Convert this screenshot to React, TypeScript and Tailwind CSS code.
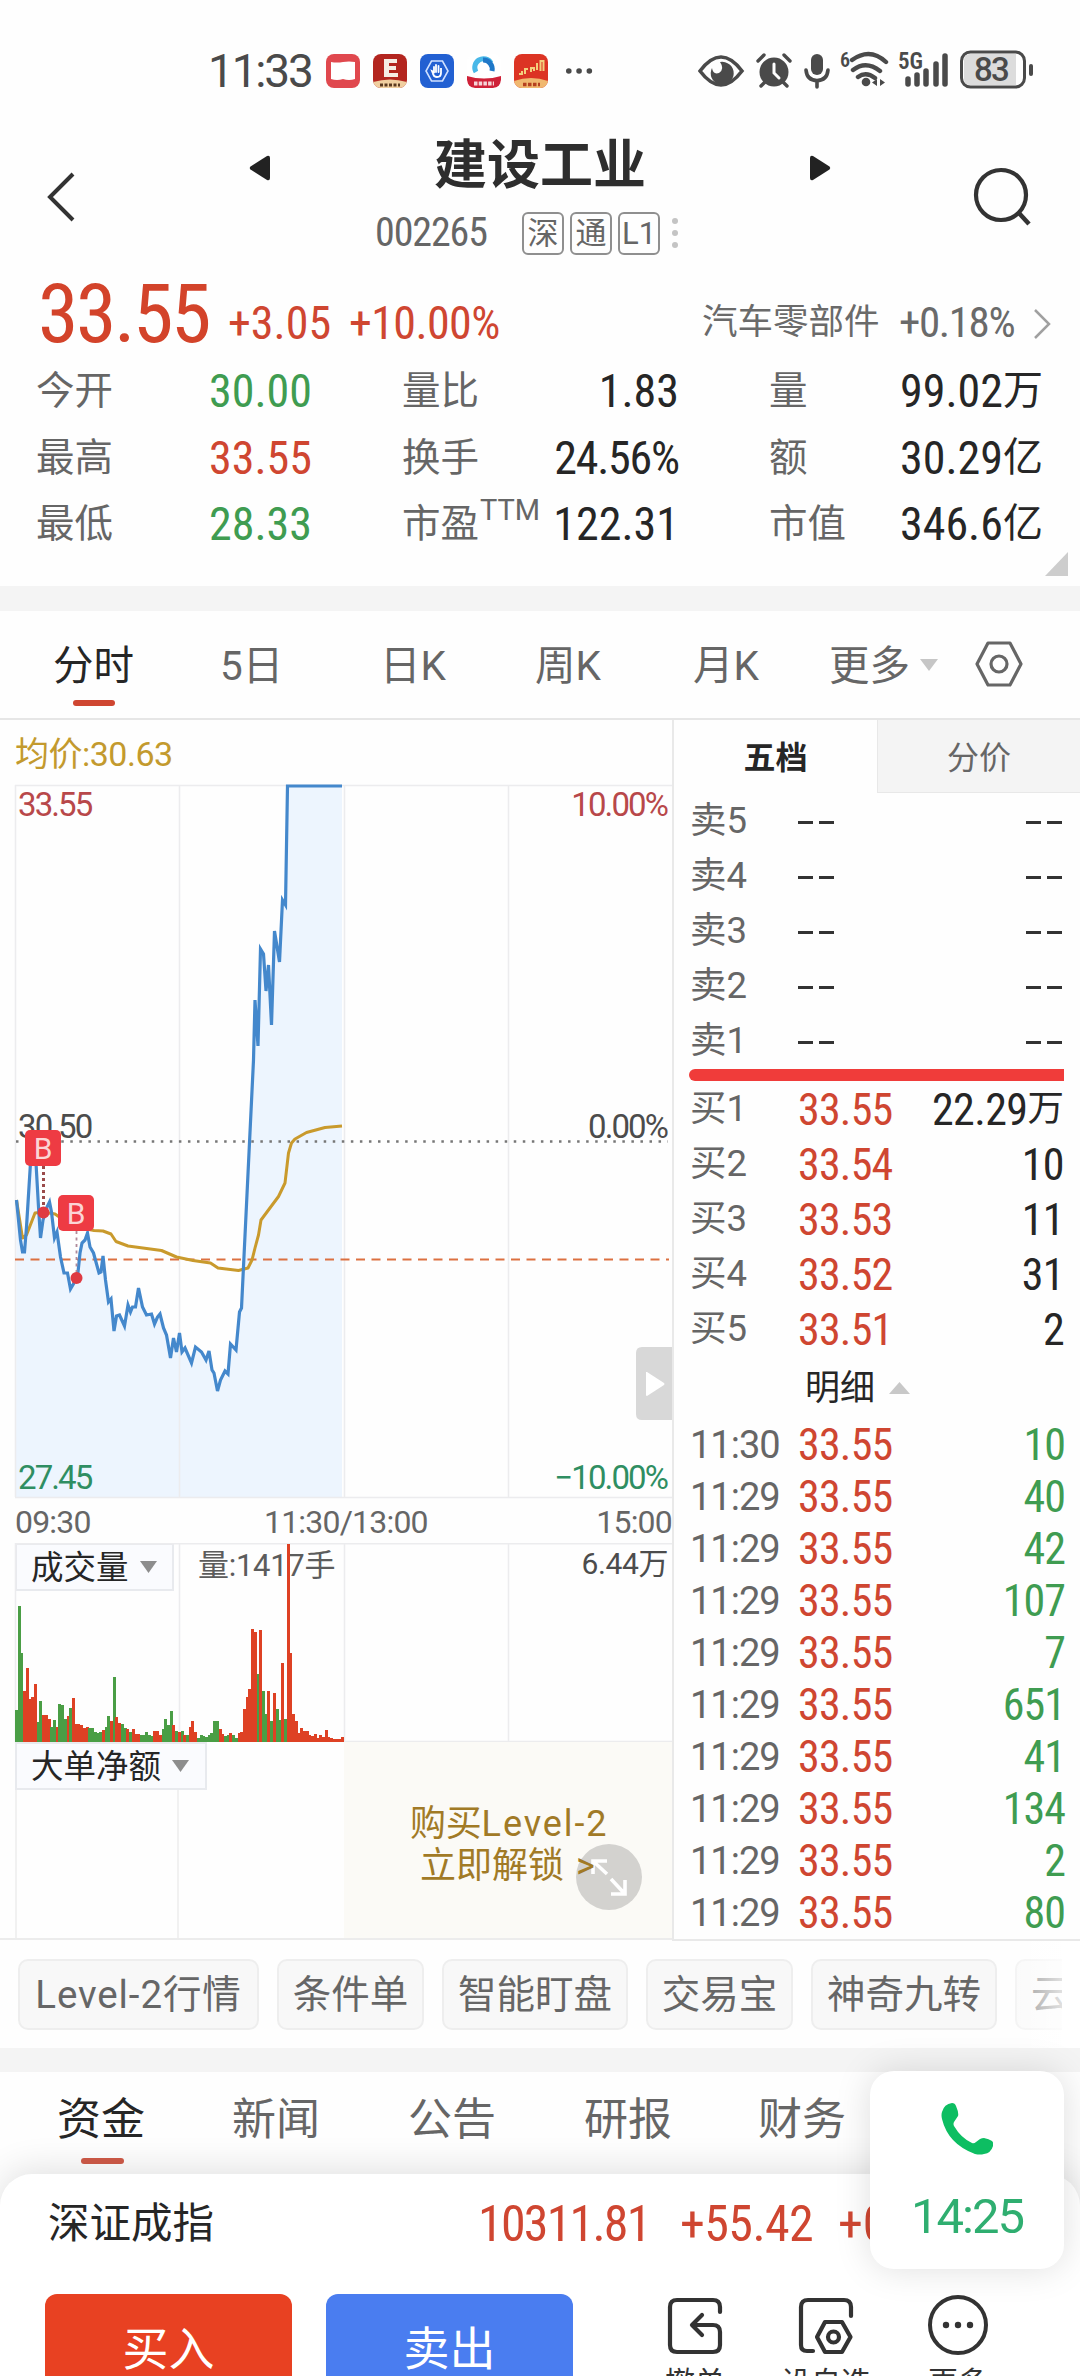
import { type ReactNode } from "react";
import clsx from "clsx";

const din = "font-['Roboto_Condensed','Roboto','Noto_Sans_CJK_SC',sans-serif] font-stretch-condensed";

const UP = "text-[#cf4631]";
const DOWN = "text-[#3f9c51]";
const DARK = "text-[#262626]";

type Stat = { label: string; value: string; unit?: string; color: string; sup?: string; tracking?: string };

const stats: Stat[][] = [
    [
        { label: "今开", value: "30.00", color: DOWN },
        { label: "量比", value: "1.83", color: DARK },
        { label: "量", value: "99.02", unit: "万", color: DARK },
    ],
    [
        { label: "最高", value: "33.55", color: UP },
        { label: "换手", value: "24.56%", color: DARK, tracking: "tracking-[-1.2px]" },
        { label: "额", value: "30.29", unit: "亿", color: DARK },
    ],
    [
        { label: "最低", value: "28.33", color: DOWN },
        { label: "市盈", value: "122.31", color: DARK, sup: "TTM" },
        { label: "市值", value: "346.6", unit: "亿", color: DARK },
    ],
];

const periods = [
    { label: "5日", width: "w-[160px]" },
    { label: "日K", width: "w-[155px]" },
    { label: "周K", width: "w-[158px]" },
    { label: "月K", width: "w-[136px]" },
];

const asks = ["卖5", "卖4", "卖3", "卖2", "卖1"];

const bids = [
    { label: "买1", price: "33.55", amount: "22.29", unit: "万" },
    { label: "买2", price: "33.54", amount: "10" },
    { label: "买3", price: "33.53", amount: "11" },
    { label: "买4", price: "33.52", amount: "31" },
    { label: "买5", price: "33.51", amount: "2" },
];

const trades = [
    { time: "11:30", amount: 10 },
    { time: "11:29", amount: 40 },
    { time: "11:29", amount: 42 },
    { time: "11:29", amount: 107 },
    { time: "11:29", amount: 7 },
    { time: "11:29", amount: 651 },
    { time: "11:29", amount: 41 },
    { time: "11:29", amount: 134 },
    { time: "11:29", amount: 2 },
    { time: "11:29", amount: 80 },
];

const chips = [
    { label: "Level-2行情", width: "w-[241px] tracking-[.9px]" },
    { label: "条件单", width: "w-[147px]" },
    { label: "智能盯盘", width: "w-[186px]" },
    { label: "交易宝", width: "w-[147px]" },
    { label: "神奇九转", width: "w-[186px]" },
];

const priceLine =
    "16.5,420 20.5,460 22.5,472 24.5,472 26.5,447 30.5,383 33.5,365 36,383 38.5,427 40.5,458 43,440 47,427 49.5,422 51.5,432 54.5,458 57,452 60.5,477 64,493 67.5,493 70.5,509 74,503 77.5,497 80,473 82,463 85,460 87.5,453 90,467 93.5,473 99,493 101,492 103,476 105.5,500 108.5,522 111,519 114,551 116.5,536 119.5,535 124.5,546 128,525 130.5,532 132.5,527 135.5,527 138.5,508 142.5,527 146.5,535 151.5,534 154.5,544 157.5,537 160,534 163.5,548 166.5,555 170.5,578 173.5,558 176.5,572 179.5,553 182,572 185,568 191.5,583 195.5,567 201.5,572 206,580 209,571 212,590 214,593 217.5,611 220.5,600 225,591 228,594 230.5,564 236,570 239.5,532 241.5,528 253.5,280 255,220 258,266 260.5,169 263.5,174 266,211 268.5,185 271.5,245 274.5,151 279.5,182 282.5,120 285.5,125 287.5,6 342,6";

const averageLine =
    "16.5,420 22.5,458 26.5,455 35,433 43,432 55,434 72,446 94,450.5 103,451 111,454 116,461.5 128,466 161.5,470.5 176.5,477 193,480.5 210.5,483 218,488 238.5,490.5 248,488 252,480 255,468 258.5,455 261,440 278.5,416.5 285,403 288.5,373 291.5,363 295,359 306.5,352.5 325,347.5 342,346";

// one entry per minute, r = up, g = down
const volumes =
    "32g 136g 89g 51r 74r 43r 45r 58r 20g 41g 27r 27r 23r 15g 22g 15r 38g 37g 23g 26r 34g 44r 18r 18r 17r 14r 15r 14g 14g 10g 9g 10g 12r 15g 26g 21r 65g 25r 19r 18g 14g 13r 10g 13r 8r 8r 7g 7g 10g 7g 6g 11r 11r 7r 13g 23g 17g 31g 17r 11g 10r 11g 7r 7g 15r 21r 10r 4g 7g 6g 5g 7g 9g 21g 21g 13r 8r 6g 7g 9r 7g 4g 9r 10r 33r 45r 53r 113r 110r 68g 112r 51g 28g 51r 21g 49r 33g 22g 79r 23g 198r 89r 28r 21r 9r 14r 11r 11r 7r 6r 8r 4r 7r 5r 12r 5r 4r 3r 3r 3r 5r"
        .split(" ")
        .map((v) => ({ height: parseInt(v), up: v.endsWith("r") }));

function AppIcon({ color, children }: { color: string; children: ReactNode }) {
    return (
        <svg className={clsx("size-[34px] rounded-[8px]", color)} viewBox="0 0 34 34">
            {children}
        </svg>
    );
}

function StatusBar() {
    return (
        <div className="flex h-[107px] pt-[35px] pl-[208px] text-[#4a4a4a]">
            <div className="flex h-[72px] w-[118px] items-center text-[46px] tracking-[-2.2px]">11:33</div>
            <div className="flex h-[72px] w-[372px] items-center gap-[13px]">
                <AppIcon color="bg-[#e0484e]">
                    <path d="M5 8q6 1 12 0t12 0v17q-6 2-12 0-6 2-12 0z" fill="#fff" />
                </AppIcon>
                <AppIcon color="bg-[#b3251f]">
                    <path d="M11 5h13v4h-8v3h7v4h-7v3h9v4H11z" fill="#f6ece4" />
                    <path d="M0 28q17-5 34 0v6H0z" fill="#f0cfa0" />
                    <path d="M7 31h20" stroke="#5a3a20" strokeWidth="3" strokeDasharray="3 1.5" />
                </AppIcon>
                <AppIcon color="bg-[#2260d2]">
                    <path d="M11.5 7h11l5.500 10-5.500 10h-11L6 17z" fill="none" stroke="#cfe0ff" strokeWidth="1.6" />
                    <path d="M14 22l-2-5 2 1v-5M16 18v-7M18.500 18v-6M21 18v-4v5q0 4-4 4-3 0-4-3" fill="none" stroke="#fff" strokeWidth="1.8" strokeLinecap="round" />
                </AppIcon>
                <AppIcon color="bg-white">
                    <path d="M9 18a8.500 8.500 0 0 1 15-9" fill="none" stroke="#48b8e8" strokeWidth="5" />
                    <path d="M16 6a9 9 0 0 1 9 11" fill="none" stroke="#1f78c8" strokeWidth="5" />
                    <path d="M0 22q17 5 34 0v4q0 8-8 8H8q-8 0-8-8z" fill="#cf2138" />
                    <path d="M7 29.500h20" stroke="#f5d5d8" strokeWidth="4" strokeDasharray="3.500 1.200" />
                </AppIcon>
                <AppIcon color="bg-[#dc3424]">
                    <path d="M0 27q17-6 34 0v7H0z" fill="#f0b870" />
                    <path d="M5 20h3v-3M11 20v-5h3M17 18v-4h3v3M23 16V9M26.500 17V7h3v10" fill="none" stroke="#f3cf7d" strokeWidth="2" />
                    <path d="M9 30.500h17" stroke="#b5401f" strokeWidth="3.500" strokeDasharray="3.500 1.500" />
                </AppIcon>
                <svg className="ml-[5px] h-[8px] w-[28px] fill-current" viewBox="0 0 30 8">
                    <circle cx="3" cy="4" r="3" />
                    <circle cx="14" cy="4" r="3" />
                    <circle cx="25" cy="4" r="3" />
                </svg>
            </div>
            <svg className="mt-[12px] h-[42px] w-[340px]" viewBox="698 47 340 42" fill="none" stroke="currentColor" strokeLinecap="round">
                <path d="M700 71q21-28 42 0-21 28-42 0z" strokeWidth="3.600" />
                <path d="M720 62a11.500 11.500 0 1 1-8 6q1 7 7 5 6-4 1-11z" fill="currentColor" stroke="none" />
                <circle cx="774" cy="72" r="14.500" fill="currentColor" stroke="none" />
                <path d="M758 61l6-6M784 55l6 6M765 82l-4 4M783 82l4 4" strokeWidth="3.400" />
                <path d="M774 64v9l5 5" stroke="#fff" strokeWidth="3" />
                <rect x="811" y="54" width="12" height="21" rx="6" fill="currentColor" stroke="none" />
                <path d="M806 70q1 10.500 11 10.500T828 70M817 81v6" strokeWidth="3.600" />
                <path d="M852 60q18-13 34 2M853 70q13-10 27 1M858 77q8-6 17 1" strokeWidth="4.400" />
                <circle cx="866" cy="82" r="4.300" fill="currentColor" stroke="none" />
                <path d="M877 79v7l-5-3.500zM880 79v7l5-3.500z" fill="currentColor" stroke="none" />
                <path d="M908 79v5M917 75v9M926 71v13M936 64v20M945 56v28" strokeWidth="5.500" />
                <rect x="961.500" y="52" width="63" height="35" rx="9" strokeWidth="3" />
                <path d="M970 54h46v31h-46q-6 0-6-6V60q0-6 6-6z" fill="#dcdcdc" stroke="none" />
                <path d="M1031 66v8" strokeWidth="4" />
                <g fill="currentColor" stroke="none" className={din}>
                    <text x="840" y="67" fontSize="20" fontWeight="600">6</text>
                    <text x="898" y="69" fontSize="23" fontWeight="600">5G</text>
                </g>
                <text x="974" y="81" fontSize="33" fontWeight="500" letterSpacing="-1.800" fill="currentColor" stroke="none">83</text>
            </svg>
        </div>
    );
}

function Badge({ children }: { children: string }) {
    return (
        <span className="flex h-[43px] w-[42px] items-center justify-center rounded-[6px] border-2 border-[#8f8f8f] text-[31px] leading-none">
            {children}
        </span>
    );
}

function Header() {
    return (
        <header className="flex h-[163px]">
            <svg className="mt-[64px] ml-[46px] h-[52px] w-[32px]" viewBox="0 0 32 52" fill="none" stroke="#333" strokeWidth="4">
                <path d="M27 3L4 26l23 23" />
            </svg>
            <div className="ml-[171px] flex w-[582px] flex-col items-center">
                <div className="flex h-[118px] w-full items-center justify-between">
                    <svg className="mt-[4px] h-[26px] w-[22px]" viewBox="0 0 22 26">
                        <path d="M21 3v20q0 3-3 2L1.500 14.500q-1.500-1.500 0-3L18 1q3-1 3 2z" fill="#222" />
                    </svg>
                    <h1 className="text-[53px] leading-none font-bold text-[#2e2e2e]">建设工业</h1>
                    <svg className="mt-[4px] h-[26px] w-[22px]" viewBox="0 0 22 26">
                        <path d="M1 3v20q0 3 3 2l16.500-10.500q1.500-1.500 0-3L4 1Q1 0 1 3z" fill="#222" />
                    </svg>
                </div>
                <div className="flex h-[16px] w-full items-center pl-[126px] text-[#666]">
                    <span className={clsx(din, "w-[147px] text-[40px] leading-none tracking-[-1.1px]")}>002265</span>
                    <span className="flex gap-[6px]">
                        <Badge>深</Badge>
                        <Badge>通</Badge>
                        <Badge>L1</Badge>
                    </span>
                    <svg className="ml-[11px] h-[32px] w-[8px]" viewBox="0 0 8 32" fill="#c4c4c4">
                        <circle cx="4" cy="4" r="3" />
                        <circle cx="4" cy="16" r="3" />
                        <circle cx="4" cy="28" r="3" />
                    </svg>
                </div>
            </div>
            <svg className="mt-[59px] mr-[46px] ml-auto h-[62px] w-[62px]" viewBox="0 0 62 62" fill="none" stroke="#333" strokeWidth="4.200">
                <circle cx="29" cy="29" r="25" />
                <path d="M46 46l11 12" strokeWidth="4.500" />
            </svg>
        </header>
    );
}

function Quote() {
    return (
        <section className="h-[316px]">
            <div className="flex h-[86px] items-center pt-[1px] pl-[38px]">
                <span className={clsx(din, "w-[190px] text-[82px] leading-none tracking-[-2.5px] text-[#d3432a]")}>33.55</span>
                <span className={clsx(din, UP, "mt-[18px] w-[121px] text-[46px] leading-none")}>+3.05</span>
                <span className={clsx(din, UP, "mt-[18px] w-[353px] text-[46px] leading-none tracking-[-.6px]")}>+10.00%</span>
                <span className="mt-[18px] w-[197px] text-[35.500px] leading-none text-[#6a6a6a]">汽车零部件</span>
                <span className={clsx(din, "mt-[18px] w-[133px] text-[43px] leading-none tracking-[-1.4px] text-[#6a6a6a]")}>+0.18%</span>
                <svg className="mt-[20px] h-[32px] w-[20px]" viewBox="0 0 20 32" fill="none" stroke="#a0a0a0" strokeWidth="2.500">
                    <path d="M3 2l14 14L3 30" />
                </svg>
            </div>
            <div className="flex flex-col pt-[2px]">
                {stats.map(([a, b, c]) => (
                    <div key={a.label} className="flex h-[66.500px] items-center pl-[36px] text-[38.500px] leading-none text-[#666]">
                        <span className="w-[173px]">{a.label}</span>
                        <span className={clsx(din, a.color, "w-[193px] text-[46px]")}>{a.value}</span>
                        <span className="flex w-[277px] items-center justify-between">
                            <span className="flex">
                                {b.label}
                                {b.sup && <sup className="top-[-9px] ml-[1px] h-[30px] text-[29px] leading-none">{b.sup}</sup>}
                            </span>
                            <span className={clsx(din, b.color, b.tracking, "text-[46px]")}>{b.value}</span>
                        </span>
                        <span className="ml-[90px] w-[131px]">{c.label}</span>
                        <span className={clsx(din, c.color, "text-[46px]")}>{c.value}</span>
                        <span className={clsx(c.color, "text-[40px]")}>{c.unit}</span>
                    </div>
                ))}
            </div>
            <svg className="mt-[-6px] mr-[12px] ml-auto h-[24px] w-[23px]" viewBox="0 0 23 24">
                <path d="M23 0v24H0z" fill="#cdcdcd" />
            </svg>
        </section>
    );
}

function PeriodTabs() {
    return (
        <nav className="flex h-[109px] border-b-2 border-[#e6e6e6] pl-[53px] text-[40.500px] leading-none text-[#666]">
            <span className="flex w-[167px] flex-col pt-[35px] text-[#262626]">
                分时
                <i className="mt-[13px] ml-[20px] h-[6px] w-[42px] rounded-full bg-[#cf4631]"></i>
            </span>
            {periods.map((p) => (
                <span key={p.label} className={clsx(p.width, "pt-[35px]")}>{p.label}</span>
            ))}
            <span className="w-[91px] pt-[35px] whitespace-nowrap">更多</span>
            <svg className="mt-[48px] h-[12px] w-[18px]" viewBox="0 0 18 12">
                <path d="M0 0h18L9 12z" fill="#c6c6c6" />
            </svg>
            <svg className="mt-[29px] ml-[37px] h-[48px] w-[48px]" viewBox="0 0 48 48" fill="none" stroke="#666" strokeWidth="3.200" strokeLinejoin="round">
                <path d="M13 3h22l11 21-11 21H13L2 24z" />
                <circle cx="24" cy="24" r="8" />
            </svg>
        </nav>
    );
}

function BuyMark({ x, y }: { x: number; y: number }) {
    return (
        <g>
            <rect x={x} y={y} width="36" height="36" rx="5" fill="#ee3b43" />
            <text x={x + 18} y={y + 28.500} fontSize="30" textAnchor="middle" fill="#fbd5d5">B</text>
        </g>
    );
}

function PriceChart() {
    return (
        <svg className="h-[720px] w-[672px]" viewBox="0 0 672 720" fill="none">
            <polygon points={`${priceLine} 342,717 16,717`} fill="#edf5fe" />
            <path d="M15 5.500h657M15 717.500h657M15.500 5v712M179.500 5v712M344.500 5v712M508.500 5v712" stroke="#ececee" strokeWidth="1.500" />
            <path d="M16 361.500h652" stroke="#777" strokeWidth="2.400" strokeDasharray="2.500 6.550" />
            <path d="M15 479.500h654" stroke="#dc7040" strokeWidth="2.200" strokeDasharray="9 6.500" />
            <g fontSize="33" letterSpacing="-1.900">
                <text x="18" y="36" fill="#b8484a">33.55</text>
                <text x="18" y="358" fill="#4c4c4c">30.50</text>
                <text x="18" y="709" fill="#2f8e62">27.45</text>
                <g textAnchor="end">
                    <text x="667" y="36" fill="#b8484a">10.00%</text>
                    <text x="667" y="358" fill="#4c4c4c">0.00%</text>
                    <text x="667" y="709" fill="#2f8e62">−10.00%</text>
                </g>
            </g>
            <polyline points={averageLine} stroke="#c99a2c" strokeWidth="3" strokeLinejoin="round" />
            <polyline points={priceLine} stroke="#4488cc" strokeWidth="3.200" />
            <path d="M43.500 386v44" stroke="#9a4a4a" strokeWidth="3" strokeDasharray="3 3" />
            <path d="M76.500 451v44" stroke="#b08a9a" strokeWidth="1.800" strokeDasharray="3 3.500" />
            <circle cx="43.500" cy="432.500" r="6" fill="#df3a42" />
            <circle cx="76.500" cy="498" r="6" fill="#df3a42" />
            <BuyMark x={25} y={350} />
            <BuyMark x={58} y={415} />
            <path d="M672 567v73h-30q-6 0-6-6v-61q0-6 6-6z" fill="#d8d8d8" />
            <path d="M646 593v22q0 1 1 1l17-11q1-1 0-2l-17-11q-1 0-1 0z" fill="#fff" />
        </svg>
    );
}

function PickerLabel({ label, className }: { label: string; className: string }) {
    return (
        <div className={clsx("absolute top-0 left-[15px] flex h-[48px] items-center gap-[11px] border-2 border-[#e8eaee] bg-[#fafbfe] pt-[2px] pl-[14px] text-[32.500px] leading-none text-[#262626]", className)}>
            {label}
            <svg className="mb-[2px] h-[12px] w-[17px]" viewBox="0 0 17 12">
                <path d="M0 0h17L8.500 12z" fill="#8d8d8d" />
            </svg>
        </div>
    );
}

function VolumeChart() {
    return (
        <div className="relative h-[199px]">
            <PickerLabel label="成交量" className="w-[159px]" />
            <svg className="relative h-[199px] w-[672px]" viewBox="0 0 672 199">
                <path d="M15 .75h657M15 198.500h657M15.500 0v199M179.500 0v199M344.500 0v199M508.500 0v199" stroke="#ececee" strokeWidth="1.500" />
                <text x="198" y="33" fontSize="31" fill="#5c5c5c" letterSpacing="-.3">量:1417手</text>
                <text x="668" y="31" fontSize="30" fill="#4c4c4c" textAnchor="end" letterSpacing="-.4">6.44万</text>
                {volumes.map((v, i) => (
                    <rect key={i} x={Math.round(15 + i * 2.715)} y={199 - v.height} width="3" height={v.height} fill={v.up ? "#de4124" : "#4a9e45"} />
                ))}
            </svg>
        </div>
    );
}

function OrderFlow() {
    return (
        <div className="relative flex h-[198px] justify-end border-b-2 border-[#ececec]">
            <div className="ml-[15px] w-[164px] border-x-2 border-[#f1f1f1]"></div>
            <div className="w-[165px]"></div>
            <PickerLabel label="大单净额" className="w-[192px]" />
            <svg className="absolute top-[102px] right-[30px] size-[66px]" viewBox="0 0 66 66" fill="none" stroke="#fff" strokeWidth="3.600">
                <circle cx="33" cy="33" r="33" fill="#d3d2cf" stroke="none" />
                <path d="M31 30L18 18M17 30V17h14M35 35l13 14M35 50h14V36" />
            </svg>
            <div className="-z-10 w-[328px] bg-[#fbfaf6]"></div>
            <div className="absolute top-[61px] left-[410px] flex flex-col text-[36px] leading-[42px] text-[#a17a26]">
                <span className="tracking-[-.2px]">购买<span className="tracking-[1.9px]">Level-2</span></span>
                <span className="pl-[10px]">立即解锁<span className="pl-[12px]">&gt;</span></span>
            </div>
        </div>
    );
}

function Dashes() {
    return (
        <span className="mt-[2px] flex gap-[6px]">
            <i className="h-[2.500px] w-[15px] bg-[#333]"></i>
            <i className="h-[2.500px] w-[15px] bg-[#333]"></i>
        </span>
    );
}

function OrderBook() {
    return (
        <aside className="w-[408px] border-b-2 border-l-2 border-[#e9e9e9] text-[#262626]">
            <div className="flex h-[73px] text-[32px] leading-none">
                <span className="flex w-[203px] items-center justify-center pt-[3px] font-bold">五档</span>
                <span className="flex flex-1 items-center justify-center border-b border-l border-[#e8e8e8] bg-[#f4f4f4] pt-[3px] text-[#666]">分价</span>
            </div>
            <div className="flex flex-col pr-[16px] pl-[16px]">
                {asks.map((label) => (
                    <div key={label} className="flex h-[55px] items-center justify-between pt-[2px] pr-[2px] text-[36.500px] leading-none">
                        <span className="w-[108px] text-[#666]">{label}</span>
                        <span className="flex-1"><Dashes /></span>
                        <Dashes />
                    </div>
                ))}
                <div className="mt-[1px] -ml-[1px] h-[12px] rounded-l-full bg-[#f03c3a]"></div>
                {bids.map((b) => (
                    <div key={b.label} className="flex h-[55px] items-center pt-[2px] text-[36.500px] leading-none">
                        <span className="w-[108px] text-[#666]">{b.label}</span>
                        <span className={clsx(din, UP, "flex-1 text-[44px] tracking-[-.8px]")}>{b.price}</span>
                        <span className={clsx(din, "text-[44px] tracking-[-.6px]")}>{b.amount}</span>
                        {b.unit && <span>{b.unit}</span>}
                    </div>
                ))}
                <div className="flex h-[62px] items-center pt-[2px] pl-[115px] text-[35px] leading-none">
                    明细
                    <svg className="ml-[14px] h-[12px] w-[21px]" viewBox="0 0 21 12">
                        <path d="M0 12h21L10.500 0z" fill="#c8c8c8" />
                    </svg>
                </div>
                {trades.map((t, i) => (
                    <div key={i} className="flex h-[52px] items-center pt-[1px] leading-none">
                        <span className="w-[108px] pt-[1px] text-[38px] tracking-[-1px] text-[#666]">{t.time}</span>
                        <span className={clsx(din, UP, "flex-1 text-[44px] tracking-[-.8px]")}>33.55</span>
                        <span className={clsx(din, DOWN, "-mr-px text-[44px] tracking-[-1px]")}>{t.amount}</span>
                    </div>
                ))}
            </div>
        </aside>
    );
}

function Chips() {
    return (
        <div className="relative flex h-[107px] gap-[18px] overflow-hidden pt-[18px] pl-[18px] text-[38.500px] leading-none text-[#666]">
            {chips.map((c) => (
                <span key={c.label} className={clsx(c.width, "flex h-[71px] shrink-0 items-center justify-center rounded-[10px] border-2 border-[#eeeeee] bg-[#f8f8f8] pt-[2px] whitespace-nowrap")}>
                    {c.label}
                </span>
            ))}
            <span className="flex h-[71px] w-[147px] shrink-0 items-center rounded-[10px] border-2 border-[#eeeeee] bg-[#f8f8f8] pt-[2px] pl-[14px]">云</span>
            <div className="absolute top-0 left-[1000px] h-full w-[62px] bg-linear-to-r from-white/20 to-white/80"></div>
            <div className="absolute top-0 right-0 h-full w-[18px] bg-white"></div>
        </div>
    );
}

function InfoTabs() {
    return (
        <nav className="flex h-[102px] pt-[26px] pl-[57px] text-[44px] leading-none text-[#666]">
            <span className="flex w-[175px] flex-col text-[#262626]">
                资金
                <i className="mt-[16px] ml-[24px] h-[6px] w-[43px] rounded-full bg-[#cf5a48]"></i>
            </span>
            <span className="w-[176px]">新闻</span>
            <span className="w-[176px]">公告</span>
            <span className="w-[174px]">研报</span>
            <span>财务</span>
        </nav>
    );
}

function BottomSheet() {
    return (
        <footer className="relative h-[202px] rounded-t-[32px] bg-white shadow-[0_-4px_36px_rgba(0,0,0,0.12)]">
            <div className={clsx(UP, "flex h-[98px] items-center pt-[2px] pl-[48px] text-[50px] leading-none")}>
                <span className="w-[430px] text-[41.500px] text-[#262626]">深证成指</span>
                <span className={clsx(din, "w-[202px] tracking-[-1.8px]")}>10311.81</span>
                <span className={clsx(din, "w-[158px] tracking-[-.6px]")}>+55.42</span>
                <span className={din}>+0</span>
            </div>
            <div className="flex pt-[22px] pl-[45px]">
                <button className="h-[110px] w-[247px] rounded-[12px] bg-[#e84122] text-[46px] leading-none text-white">买入</button>
                <button className="ml-[34px] h-[110px] w-[247px] rounded-[12px] bg-[#4a7df0] text-[46px] leading-none text-white">卖出</button>
                <div className="ml-[57px] flex text-[30px] leading-none text-[#333]">
                    <span className="flex w-[130px] flex-col items-center gap-[12px]">
                        <svg className="h-[62px] w-[60px]" viewBox="0 0 60 62" fill="none" stroke="#333" strokeWidth="4.200" strokeLinecap="round" strokeLinejoin="round">
                            <path d="M55 18v-5q0-7-7-7H12q-7 0-7 7v38q0 7 7 7h36q7 0 7-7V38q0-7-7-7H28M37 21L27 31l10 10" />
                        </svg>
                        撤单
                    </span>
                    <span className="flex w-[132px] flex-col items-center gap-[12px]">
                        <svg className="h-[62px] w-[60px]" viewBox="0 0 60 62" fill="none" stroke="#333" strokeWidth="4.200" strokeLinecap="round" strokeLinejoin="round">
                            <path d="M55 22v-9q0-7-7-7H12q-7 0-7 7v38q0 6 6 6h6" />
                            <path d="M29 28h17l8.500 15L46 58H29l-8-15z" />
                            <circle cx="37.500" cy="43" r="5.500" />
                        </svg>
                        设自选
                    </span>
                    <span className="flex w-[132px] flex-col items-center gap-[12px]">
                        <svg className="h-[62px] w-[60px]" viewBox="0 0 60 62" fill="none" stroke="#333" strokeWidth="4">
                            <circle cx="30" cy="31" r="28" />
                            <g fill="#333" stroke="none">
                                <circle cx="18" cy="31" r="3.200" />
                                <circle cx="30" cy="31" r="3.200" />
                                <circle cx="42" cy="31" r="3.200" />
                            </g>
                        </svg>
                        更多
                    </span>
                </div>
            </div>
        </footer>
    );
}

function CallBubble() {
    return (
        <div className="absolute top-[2071px] left-[870px] flex h-[198px] w-[194px] flex-col items-center rounded-[24px] bg-white pt-[31px] shadow-[0_0_36px_rgba(0,0,0,0.13)]">
            <svg className="h-[54px] w-[52px]" viewBox="0 0 52 54">
                <path d="M1 10Q3 2 11 1q3 0 4 3 3 7 2 10l-4 6q-1 2 0 4 7 12 18 17 2 1 4-1l4-3q2-1 4-1 5 1 8 3 2 2 1 5-2 7-9 8-4 1-9 0Q7 42 1 17q-1-4 0-7z" fill="#0dbe62" />
            </svg>
            <span className="mt-[36px] text-[49px] leading-none tracking-[-2px] text-[#2fae70]">14:25</span>
        </div>
    );
}

export default function App() {
    return (
        <main className="relative isolate flex h-[2376px] w-[1080px] flex-col overflow-hidden bg-[#fefefe] font-['Roboto','Noto_Sans_CJK_SC',sans-serif]">
            <StatusBar />
            <Header />
            <Quote />
            <div className="h-[25px] shrink-0 bg-[#f4f4f4]"></div>
            <PeriodTabs />
            <div className="flex h-[1221px] shrink-0">
                <section className="flex w-[672px] flex-col">
                    <p className="h-[60px] pt-[17px] pl-[15px] text-[34px] leading-none tracking-[-.5px] text-[#c39a2e]">均价:30.63</p>
                    <PriceChart />
                    <div className="flex h-[43px] justify-between pt-[6px] pl-[15px] text-[32px] leading-none tracking-[-.8px] text-[#666]">
                        <span className="w-[249px]">09:30</span>
                        <span className="flex-1">11:30/13:00</span>
                        <span>15:00</span>
                    </div>
                    <VolumeChart />
                    <OrderFlow />
                </section>
                <OrderBook />
            </div>
            <Chips />
            <div className="h-[24px] shrink-0 bg-[#f4f4f4]"></div>
            <InfoTabs />
            <BottomSheet />
            <CallBubble />
        </main>
    );
}
